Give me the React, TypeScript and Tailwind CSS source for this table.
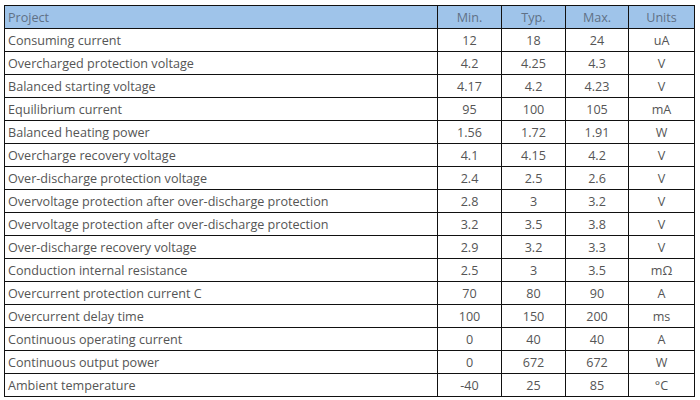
import React from 'react'

type Row = [string, string, string, string, string]

const rows: Row[] = [
  ['Consuming current', '12', '18', '24', 'uA'],
  ['Overcharged protection voltage', '4.2', '4.25', '4.3', 'V'],
  ['Balanced starting voltage', '4.17', '4.2', '4.23', 'V'],
  ['Equilibrium current', '95', '100', '105', 'mA'],
  ['Balanced heating power', '1.56', '1.72', '1.91', 'W'],
  ['Overcharge recovery voltage', '4.1', '4.15', '4.2', 'V'],
  ['Over-discharge protection voltage', '2.4', '2.5', '2.6', 'V'],
  ['Overvoltage protection after over-discharge protection', '2.8', '3', '3.2', 'V'],
  ['Overvoltage protection after over-discharge protection', '3.2', '3.5', '3.8', 'V'],
  ['Over-discharge recovery voltage', '2.9', '3.2', '3.3', 'V'],
  ['Conduction internal resistance', '2.5', '3', '3.5', 'mΩ'],
  ['Overcurrent protection current C', '70', '80', '90', 'A'],
  ['Overcurrent delay time', '100', '150', '200', 'ms'],
  ['Continuous operating current', '0', '40', '40', 'A'],
  ['Continuous output power', '0', '672', '672', 'W'],
  ['Ambient temperature', '-40', '25', '85', '°C'],
]

const App: React.FC = () => {
  return (
    <div className="w-[700px] h-[400px] bg-white pt-[5px] pl-[4px] font-['Open_Sans',sans-serif] text-[12.6px] text-[#555]">
      <table className="border-collapse table-fixed w-[690px]">
        <colgroup>
          <col className="w-[433px]" />
          <col className="w-[64px]" />
          <col className="w-[64px]" />
          <col className="w-[63px]" />
          <col className="w-[66px]" />
        </colgroup>
        <thead>
          <tr className="h-[23px] bg-[#9fc4ea] text-[#5f7186]">
            <th className="border border-[#111] px-[3px] text-left font-normal leading-[21px]">Project</th>
            <th className="border border-[#111] text-center font-normal leading-[21px]">Min.</th>
            <th className="border border-[#111] text-center font-normal leading-[21px]">Typ.</th>
            <th className="border border-[#111] text-center font-normal leading-[21px]">Max.</th>
            <th className="border border-[#111] text-center font-normal leading-[21px]">Units</th>
          </tr>
        </thead>
        <tbody>
          {rows.map((r, i) => (
            <tr key={i} className="h-[23px]">
              <td className="border border-[#111] px-[3px] leading-[21px] whitespace-nowrap">{r[0]}</td>
              <td className="border border-[#111] text-center leading-[21px]">{r[1]}</td>
              <td className="border border-[#111] text-center leading-[21px]">{r[2]}</td>
              <td className="border border-[#111] text-center leading-[21px]">{r[3]}</td>
              <td className="border border-[#111] text-center leading-[21px]">{r[4]}</td>
            </tr>
          ))}
        </tbody>
      </table>
    </div>
  )
}

export default App
